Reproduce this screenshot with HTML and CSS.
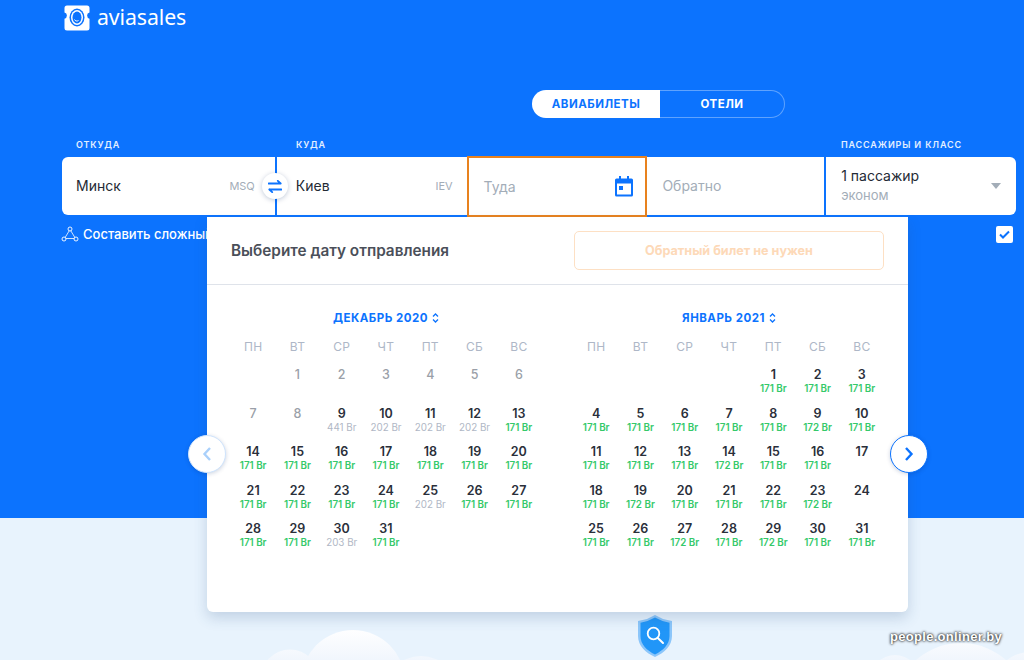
FILE: index.html
```html
<!DOCTYPE html>
<html lang="ru">
<head>
<meta charset="utf-8">
<title>Aviasales</title>
<link rel="stylesheet" href="styles.css">
</head>
<body>
<div class="page">
  <section class="hero">
    <a class="logo">
      <svg class="logo-mark" width="26" height="26" viewBox="0 0 26 26"><path fill="#fff" d="M3 0.5h20a2.5 2.5 0 0 1 2.5 2.5v4.500a3.200 3.200 0 0 0 0 6.200v9.300a2.500 2.500 0 0 1-2.500 2.500h-20a2.500 2.500 0 0 1-2.500-2.500v-9.300a3.200 3.200 0 0 0 0-6.200v-4.500a2.500 2.500 0 0 1 2.500-2.500z"/><ellipse cx="13" cy="12.500" rx="7.500" ry="9" fill="#0c73fe"/><ellipse cx="13" cy="12.500" rx="6" ry="7.500" fill="#fff"/><ellipse cx="13" cy="12.500" rx="4.500" ry="6" fill="#0c73fe"/><path d="M10.500 14.500c.5 1.500 2.500 2 4 1" stroke="#fff" stroke-width="1" fill="none"/></svg>
      <span class="logo-text">aviasales</span>
    </a>
    <div class="tabs">
      <span class="tab tab-on">АВИАБИЛЕТЫ</span>
      <span class="tab tab-off">ОТЕЛИ</span>
    </div>
    <div class="labels">
      <span class="label l-from">ОТКУДА</span>
      <span class="label l-to">КУДА</span>
      <span class="label l-pass">ПАССАЖИРЫ И КЛАСС</span>
    </div>
    <div class="form">
      <div class="field f-from"><span class="val">Минск</span><span class="iata">MSQ</span>
        <span class="swap"><svg width="14" height="13" viewBox="0 0 14 13"><path d="M.7 3.500h12M9.800.8l2.900 2.700M13.300 9.500h-12M4.200 12.200L1.300 9.500" stroke="#0c73fe" stroke-width="1.800" fill="none" stroke-linecap="round" stroke-linejoin="round"/></svg></span>
      </div>
      <div class="field f-to"><span class="val">Киев</span><span class="iata">IEV</span></div>
      <div class="field f-dep"><span class="ph">Туда</span>
        <svg width="20" height="21" viewBox="0 0 20 21"><path fill="#0c73fe" d="M5 0h2v2.500h6V0h2v2.500h2.500A1.500 1.500 0 0 1 19 4v15a1.500 1.500 0 0 1-1.500 1.500h-15A1.500 1.500 0 0 1 1 19V4a1.500 1.500 0 0 1 1.500-1.500H5zM3 7.500V18.500h14V7.500z"/><rect x="5" y="10" width="4" height="4" fill="#0c73fe"/></svg>
      </div>
      <div class="field f-ret"><span class="ph">Обратно</span></div>
      <div class="field f-pass">
        <div><div class="pass-main">1 пассажир</div><div class="pass-sub">эконом</div></div>
        <span class="caret"></span>
      </div>
    </div>
    <div class="below">
      <a class="multi">
        <svg width="18" height="16" viewBox="0 0 18 16"><path d="M9 3.500L3.500 12.500h11z" stroke="#fff" stroke-width=".8" fill="none"/><circle cx="9" cy="3" r="2" fill="#0c73fe" stroke="#fff" stroke-width=".9"/><circle cx="3" cy="13" r="2" fill="#0c73fe" stroke="#fff" stroke-width=".9"/><circle cx="15" cy="13" r="2" fill="#0c73fe" stroke="#fff" stroke-width=".9"/></svg>
        Составить сложный маршрут
      </a>
      <span class="check"><svg width="11" height="9" viewBox="0 0 11 9"><path d="M1 4.500l3 3 6-6" stroke="#0c73fe" stroke-width="2" fill="none"/></svg></span>
    </div>

    <div class="panel">
      <div class="panel-head">
        <span class="panel-title">Выберите дату отправления</span>
        <span class="no-return">Обратный билет не нужен</span>
      </div>
      <div class="months">
        <div class="month">
          <div class="month-title">ДЕКАБРЬ 2020 <svg width="7" height="10" viewBox="0 0 7 10"><path d="M1 3.500l2.500-2.500 2.500 2.500M1 6.500l2.500 2.500 2.500-2.500" stroke="#0c73fe" stroke-width="1.300" fill="none"/></svg></div>
          <div class="week"><span>ПН</span><span>ВТ</span><span>СР</span><span>ЧТ</span><span>ПТ</span><span>СБ</span><span>ВС</span></div>
          <div class="days">
            <div class="day"></div>
            <div class="day off"><b>1</b></div><div class="day off"><b>2</b></div><div class="day off"><b>3</b></div><div class="day off"><b>4</b></div><div class="day off"><b>5</b></div><div class="day off"><b>6</b></div>
            <div class="day off"><b>7</b></div><div class="day off"><b>8</b></div>
            <div class="day"><b>9</b><i class="hi">441 Br</i></div><div class="day"><b>10</b><i class="hi">202 Br</i></div><div class="day"><b>11</b><i class="hi">202 Br</i></div><div class="day"><b>12</b><i class="hi">202 Br</i></div><div class="day"><b>13</b><i>171 Br</i></div>
            <div class="day"><b>14</b><i>171 Br</i></div><div class="day"><b>15</b><i>171 Br</i></div><div class="day"><b>16</b><i>171 Br</i></div><div class="day"><b>17</b><i>171 Br</i></div><div class="day"><b>18</b><i>171 Br</i></div><div class="day"><b>19</b><i>171 Br</i></div><div class="day"><b>20</b><i>171 Br</i></div>
            <div class="day"><b>21</b><i>171 Br</i></div><div class="day"><b>22</b><i>171 Br</i></div><div class="day"><b>23</b><i>171 Br</i></div><div class="day"><b>24</b><i>171 Br</i></div><div class="day"><b>25</b><i class="hi">202 Br</i></div><div class="day"><b>26</b><i>171 Br</i></div><div class="day"><b>27</b><i>171 Br</i></div>
            <div class="day"><b>28</b><i>171 Br</i></div><div class="day"><b>29</b><i>171 Br</i></div><div class="day"><b>30</b><i class="hi">203 Br</i></div><div class="day"><b>31</b><i>171 Br</i></div>
          </div>
        </div>
        <div class="month">
          <div class="month-title">ЯНВАРЬ 2021 <svg width="7" height="10" viewBox="0 0 7 10"><path d="M1 3.500l2.500-2.500 2.500 2.500M1 6.500l2.500 2.500 2.500-2.500" stroke="#0c73fe" stroke-width="1.300" fill="none"/></svg></div>
          <div class="week"><span>ПН</span><span>ВТ</span><span>СР</span><span>ЧТ</span><span>ПТ</span><span>СБ</span><span>ВС</span></div>
          <div class="days">
            <div class="day"></div><div class="day"></div><div class="day"></div><div class="day"></div>
            <div class="day"><b>1</b><i>171 Br</i></div><div class="day"><b>2</b><i>171 Br</i></div><div class="day"><b>3</b><i>171 Br</i></div>
            <div class="day"><b>4</b><i>171 Br</i></div><div class="day"><b>5</b><i>171 Br</i></div><div class="day"><b>6</b><i>171 Br</i></div><div class="day"><b>7</b><i>171 Br</i></div><div class="day"><b>8</b><i>171 Br</i></div><div class="day"><b>9</b><i>172 Br</i></div><div class="day"><b>10</b><i>171 Br</i></div>
            <div class="day"><b>11</b><i>171 Br</i></div><div class="day"><b>12</b><i>171 Br</i></div><div class="day"><b>13</b><i>171 Br</i></div><div class="day"><b>14</b><i>172 Br</i></div><div class="day"><b>15</b><i>171 Br</i></div><div class="day"><b>16</b><i>171 Br</i></div><div class="day"><b>17</b></div>
            <div class="day"><b>18</b><i>171 Br</i></div><div class="day"><b>19</b><i>172 Br</i></div><div class="day"><b>20</b><i>171 Br</i></div><div class="day"><b>21</b><i>171 Br</i></div><div class="day"><b>22</b><i>171 Br</i></div><div class="day"><b>23</b><i>172 Br</i></div><div class="day"><b>24</b></div>
            <div class="day"><b>25</b><i>171 Br</i></div><div class="day"><b>26</b><i>171 Br</i></div><div class="day"><b>27</b><i>172 Br</i></div><div class="day"><b>28</b><i>171 Br</i></div><div class="day"><b>29</b><i>172 Br</i></div><div class="day"><b>30</b><i>171 Br</i></div><div class="day"><b>31</b><i>171 Br</i></div>
          </div>
        </div>
      </div>
      <span class="nav nav-prev"><svg width="10" height="16" viewBox="0 0 10 16"><path d="M8 2L2.500 8 8 14" stroke="#a9d0fb" stroke-width="2.400" fill="none"/></svg></span>
      <span class="nav nav-next"><svg width="10" height="16" viewBox="0 0 10 16"><path d="M2 2l5.500 6L2 14" stroke="#0c73fe" stroke-width="2.400" fill="none"/></svg></span>
    </div>
  </section>
  <section class="ground">
    <svg class="clouds" width="1024" height="32" viewBox="0 0 1024 32">
      <defs><linearGradient id="cl" gradientUnits="userSpaceOnUse" x1="0" y1="0" x2="0" y2="32"><stop offset="0" stop-color="#fff"/><stop offset="1" stop-color="#f1f6fd"/></linearGradient></defs>
      <circle cx="290" cy="51" r="29.500" fill="url(#cl)"/><circle cx="353" cy="54" r="52" fill="url(#cl)"/><circle cx="421" cy="66" r="38" fill="url(#cl)"/>
      <circle cx="895" cy="52" r="25" fill="url(#cl)"/><circle cx="961" cy="83" r="68" fill="url(#cl)"/><circle cx="1030" cy="61" r="37" fill="url(#cl)"/>
    </svg>
    <svg class="shield" width="34" height="42" viewBox="0 0 34 42"><path fill="#8cc6fa" d="M17 0l8 4 9 2v15c0 10-8 17-17 21C8 38 0 31 0 21V6l9-2z"/><path fill="#2196f8" d="M17 2.500l7.500 3.500 7 1.700V21c0 8.500-6.500 14.500-14.500 18.500C9 35.500 2.500 29.500 2.500 21V7.700L9.500 6z"/><circle cx="15.500" cy="18.500" r="5.800" fill="none" stroke="#fff" stroke-width="1.800"/><path d="M19.800 23l5.200 5" stroke="#fff" stroke-width="2" stroke-linecap="round"/></svg>
    <span class="mark">people.onliner.by</span>
  </section>
</div>
</body>
</html>
```
FILE: styles.css
```css
* { box-sizing: border-box; }
html, body { margin: 0; padding: 0; }
body { font-family: Inter, "Liberation Sans", sans-serif; color: #242a35; }
.page { width: 1024px; height: 660px; overflow: hidden; display: flex; flex-direction: column; }
.hero { position: relative; height: 518px; flex: none; background: #0c73fe; padding: 5px 8px 0 62px; }
.logo { display: flex; align-items: center; gap: 7px; height: 25px; margin-left: 2px; color: #fff; }
.logo-mark { width: 26px; height: 26px; flex: none; }
.logo-text { font: 400 21.300px/25px "Noto Sans", Inter, sans-serif; letter-spacing: -.1px; position: relative; top: -1px; }
.tabs { display: flex; width: 253px; height: 28px; margin: 60px 0 0 470px; border-radius: 14px; font-size: 11.500px; font-weight: 700; letter-spacing: .5px; line-height: 28px; text-align: center; }
.tab { display: block; }
.tab-on { width: 128px; background: #fff; color: #0c73fe; border-radius: 14px 0 0 14px; }
.tab-off { flex: 1; color: #fff; border: 1px solid #5fa3fe; border-left: none; border-radius: 0 14px 14px 0; line-height: 26px; }
.labels { position: relative; height: 14px; margin-top: 20px; color: #e3efff; font-size: 9px; font-weight: 600; letter-spacing: .85px; line-height: 14px; display: flex; }
.label { display: block; }
.l-from { margin-left: 14px; width: 220px; }
.l-to { width: 545px; }
.form { display: flex; height: 58px; margin-top: 5px; width: 954px; position: relative; z-index: 1; }
.field { position: relative; display: flex; align-items: center; justify-content: space-between; background: #fff; height: 58px; font-size: 14px; padding-bottom: 1px; }
.f-from { width: 213px; padding: 0 20px 1px 14px; border-radius: 6px 0 0 6px; }
.f-to { width: 190px; margin-left: 2px; padding: 0 14px 1px 19px; }
.f-dep { width: 181px; margin-left: 0; padding: 0 11px 1px 15px; border: 2px solid #e8821e; height: 61px; margin-top: -1px; }
.f-ret { width: 177px; padding: 0 15px 1px; }
.f-pass { width: 190px; margin-left: 2px; padding: 0 15px; border-radius: 0 6px 6px 0; }
.val { color: #242a35; }
.iata { font-size: 11px; color: #a3adb8; }
.ph { color: #a3adb8; }
.swap { position: absolute; right: -13px; top: 16px; z-index: 2; width: 26px; height: 26px; border-radius: 50%; background: #fff; box-shadow: 0 1px 5px rgba(0,40,100,.25); display: flex; align-items: center; justify-content: center; }
.pass-main { font-size: 14px; line-height: 18px; color: #242a35; }
.pass-sub { font-size: 13px; line-height: 20px; color: #a3adb8; }
.caret { width: 0; height: 0; border: 5px solid transparent; border-top: 6px solid #a3adb8; border-bottom: none; margin-right: 0; }
.below { display: flex; justify-content: space-between; align-items: center; margin-top: 9px; width: 951px; height: 20px; }
.multi { display: flex; align-items: center; gap: 4px; color: #fff; font-size: 13px; font-weight: 500; white-space: nowrap; margin-left: -1px; }
.check { width: 17px; height: 17px; background: #fff; border-radius: 2px; display: flex; align-items: center; justify-content: center; }
.panel { position: absolute; left: 207px; top: 217px; width: 701px; height: 395px; background: #fff; border-radius: 0 0 6px 6px; box-shadow: 0 6px 14px rgba(40,80,130,.2); z-index: 3; }
.panel-head { height: 68px; border-bottom: 1px solid #dfe3ea; display: flex; align-items: center; justify-content: space-between; padding: 0 24px; }
.panel-title { font-size: 15.300px; font-weight: 600; color: #4a4f59; }
.no-return { width: 310px; height: 39px; border: 1px solid #fde0c4; border-radius: 5px; color: #fdd9b8; font-size: 12.600px; font-weight: 700; line-height: 37px; text-align: center; }
.months { display: flex; gap: 33px; padding: 25px 24px 0; }
.month { width: 310px; }
.month-title { height: 16px; display: flex; align-items: center; justify-content: center; gap: 4px; color: #0c73fe; font-size: 11.500px; font-weight: 700; letter-spacing: .5px; }
.week { display: grid; grid-template-columns: repeat(7, 1fr); height: 16px; margin-top: 13px; color: #aeb7c7; font-size: 12px; line-height: 16px; text-align: center; letter-spacing: .3px; }
.days { display: grid; grid-template-columns: repeat(7, 1fr); grid-auto-rows: 38.5px; margin-top: 12px; text-align: center; }
.day b { display: block; font-size: 12.500px; font-weight: 600; line-height: 16px; color: #2a2f3a; }
.day i { display: block; font-style: normal; font-size: 9.800px; font-weight: 600; line-height: 12px; color: #35c96a; }
.day i.hi { color: #b0b7c5; font-weight: 400; }
.day.off b { color: #9a9fa8; font-weight: 500; }
.nav { position: absolute; top: 218px; width: 38px; height: 38px; border-radius: 50%; background: #fff; display: flex; align-items: center; justify-content: center; box-shadow: 0 1px 4px rgba(0,40,100,.2); }
.nav-prev { left: -19px; border: 1px solid #cfe4fd; }
.nav-next { right: -20px; border: 1px solid #0c73fe; }
.ground { position: relative; flex: 1; background: #e8f3fd; }
.clouds { position: absolute; left: 0; bottom: 0; }
.shield { position: absolute; left: 638px; top: 97px; }
.mark { position: absolute; left: 890px; top: 111px; color: #fff; font-family: "Liberation Sans", sans-serif; font-size: 13px; font-weight: 700; letter-spacing: .3px; line-height: 16px; text-shadow: 0 0 3px rgba(0,0,0,.9), 0 0 2px rgba(0,0,0,.7); }
```
